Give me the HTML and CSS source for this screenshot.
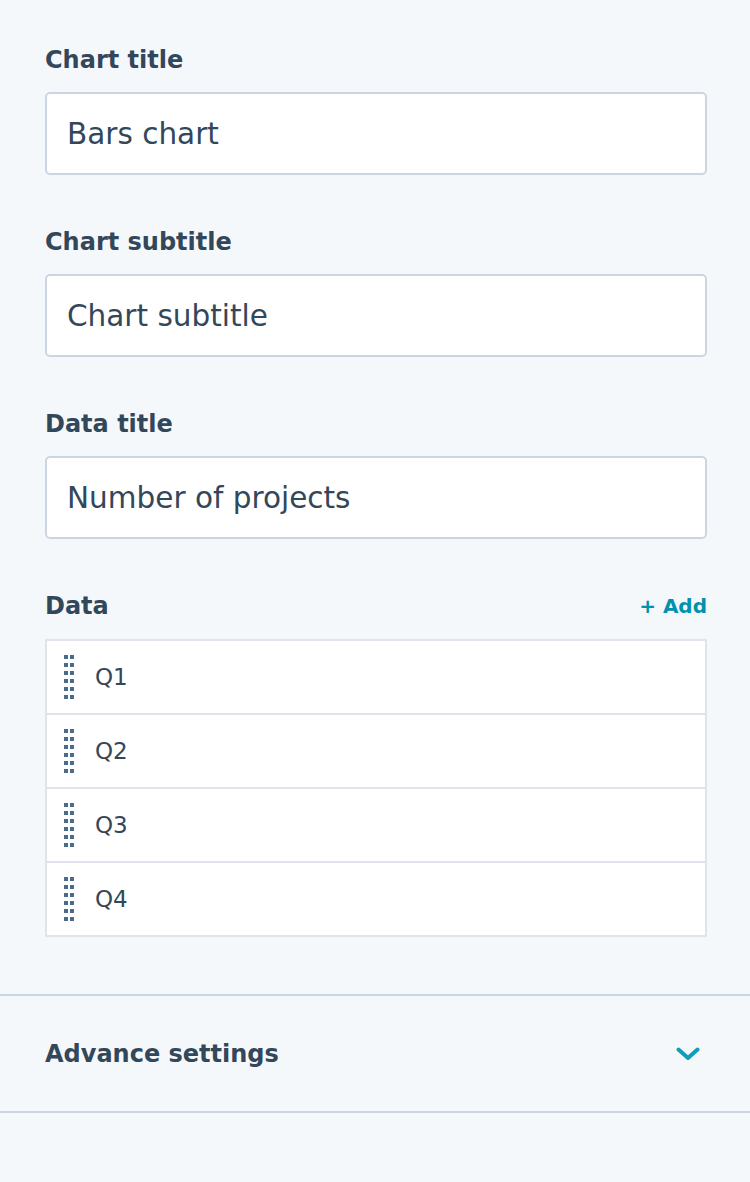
FILE: index.html
```html
<!DOCTYPE html>
<html lang="en">
<head>
<meta charset="utf-8">
<title>Chart settings</title>
<link rel="stylesheet" href="styles.css">
</head>
<body>
<div class="panel">
  <div class="fields">
    <div class="field">
      <label class="label">Chart title</label>
      <div class="input">Bars chart</div>
    </div>
    <div class="field">
      <label class="label">Chart subtitle</label>
      <div class="input">Chart subtitle</div>
    </div>
    <div class="field">
      <label class="label">Data title</label>
      <div class="input">Number of projects</div>
    </div>
    <div class="field data-field">
      <div class="data-head">
        <span class="label">Data</span>
        <span class="add">+ Add</span>
      </div>
      <ul class="data-list">
        <li class="row"><span class="grip"></span><span class="row-text">Q1</span></li>
        <li class="row"><span class="grip"></span><span class="row-text">Q2</span></li>
        <li class="row"><span class="grip"></span><span class="row-text">Q3</span></li>
        <li class="row"><span class="grip"></span><span class="row-text">Q4</span></li>
      </ul>
    </div>
  </div>
  <div class="accordion">
    <span class="acc-title">Advance settings</span>
    <svg class="chevron" width="24" height="14" viewBox="0 0 24 14"><path d="M2.5 2.5 L12 11 L21.5 2.5" fill="none" stroke="#0f9fb8" stroke-width="4" stroke-linecap="round" stroke-linejoin="round"/></svg>
  </div>
</div>
</body>
</html>
```
FILE: styles.css
```css
html, body {
  margin: 0;
  padding: 0;
  background: #f5f8fa;
}
body {
  font-family: "DejaVu Sans", "Noto Sans", sans-serif;
  color: #33475b;
  width: 750px;
  height: 1182px;
  overflow: hidden;
}
.fields {
  padding: 44px 43px 0 45px;
}
.field {
  margin-bottom: 51px;
}
.label {
  display: block;
  font-size: 24px;
  font-weight: 700;
  line-height: 32px;
  color: #33475b;
  margin-bottom: 16px;
}
.input {
  box-sizing: border-box;
  height: 83px;
  background: #fff;
  border: 2px solid #cbd6e2;
  border-radius: 5px;
  padding: 0 20px;
  display: flex;
  align-items: center;
  font-size: 29.5px;
  color: #33475b;
}
.data-field {
  margin-bottom: 57px;
}
.data-head {
  display: flex;
  justify-content: space-between;
  align-items: center;
  margin-bottom: 17px;
}
.data-head .label {
  margin-bottom: 0;
}
.add {
  font-size: 20px;
  font-weight: 700;
  color: #0091ae;
}
.data-list {
  list-style: none;
  margin: 0;
  padding: 0;
  border: 2px solid #dfe3eb;
  background: #fff;
}
.row {
  height: 72px;
  display: flex;
  align-items: center;
  padding-left: 17px;
  border-bottom: 2px solid #dfe3eb;
}
.row:last-child {
  border-bottom: none;
}
.grip {
  width: 10px;
  height: 44px;
  background-repeat: repeat-y;
  background-size: 4px 8px, 4px 8px;
  background-image:
    linear-gradient(to bottom, #4b6a8c 0, #4b6a8c 4px, transparent 4px),
    linear-gradient(to bottom, #4b6a8c 0, #4b6a8c 4px, transparent 4px);
  background-position: 0 0, 6px 0;
  margin-right: 21px;
}
.row-text {
  font-size: 23px;
  color: #33475b;
}
.accordion {
  box-sizing: border-box;
  height: 119px;
  border-top: 2px solid #cbd6e2;
  border-bottom: 2px solid #cbd6e2;
  display: flex;
  align-items: center;
  justify-content: space-between;
  padding: 0 50px 0 45px;
}
.acc-title {
  font-size: 24px;
  font-weight: 700;
  color: #33475b;
}
.chevron {
  display: block;
}
```
